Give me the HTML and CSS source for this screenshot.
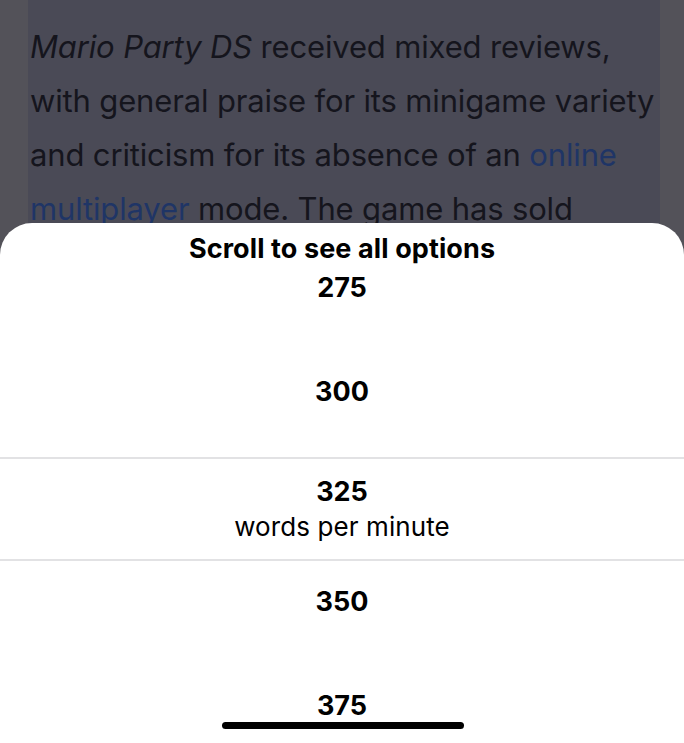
FILE: index.html
```html
<!DOCTYPE html>
<html lang="en">
<head>
    <meta charset="UTF-8">
    <meta name="viewport" content="width=device-width, initial-scale=1.0">
    <title>Reading speed</title>
    <link rel="stylesheet" href="styles.css">
</head>
<body>
    <div class="page">
        <p class="article">
            <i>Mario Party DS</i> received mixed reviews, with general praise for its minigame variety and criticism for its absence of an <a href="#">online multiplayer</a> mode. The game has sold
        </p>
    </div>

    <div class="sheet">
        <div class="sheet-title">Scroll to see all options</div>
        <div class="picker">
            <div class="option first">275</div>
            <div class="option">300</div>
            <div class="option selected">
                <div class="value">325</div>
                <div class="unit">words per minute</div>
            </div>
            <div class="option after-selected">350</div>
            <div class="option">375</div>
        </div>
        <div class="home-indicator"></div>
    </div>
</body>
</html>
```

FILE: styles.css
```css
html, body {
    height: 100%;
}

body {
    margin: 0;
    background-color: #535259;
    font-family: Inter, 'Noto Sans', sans-serif;
    overflow: hidden;
}

.page {
    margin: 0 24px 0 28px;
    padding: 0 4px 0 2px;
    height: 100%;
    background-color: #4a4a56;
}

.article {
    margin: 0;
    padding-top: 20px;
    font-size: 31px;
    line-height: 54px;
    letter-spacing: -0.15px;
    color: #15151d;
}

.article a {
    color: #1f3566;
    text-decoration: none;
}

/* bottom sheet */
.sheet {
    position: absolute;
    top: 223px;
    left: 0;
    right: 0;
    bottom: 0;
    background-color: #fff;
    border-radius: 32px 32px 0 0;
    padding-top: 10px;
    text-align: center;
    color: #000;
    overflow: hidden;
}

.sheet-title {
    font-size: 27px;
    font-weight: 700;
    line-height: 32px;
    letter-spacing: 0.1px;
}

.picker {
    display: flex;
    flex-direction: column;
}

.option {
    font-size: 27px;
    font-weight: 700;
    line-height: 32px;
    margin-top: 72px;
}

.option.first {
    margin-top: 7px;
}

.option.selected {
    margin-top: 49px;
    padding: 17px 0 16px;
    border-top: 2px solid #e2e2e4;
    border-bottom: 2px solid #e2e2e4;
}

.option.after-selected {
    margin-top: 25px;
}

.unit {
    margin-top: 3px;
    font-size: 26px;
    font-weight: 400;
    letter-spacing: 0.1px;
}

.home-indicator {
    position: absolute;
    left: 222px;
    bottom: 14px;
    width: 242px;
    height: 7px;
    border-radius: 4px;
    background-color: #000;
}
```
